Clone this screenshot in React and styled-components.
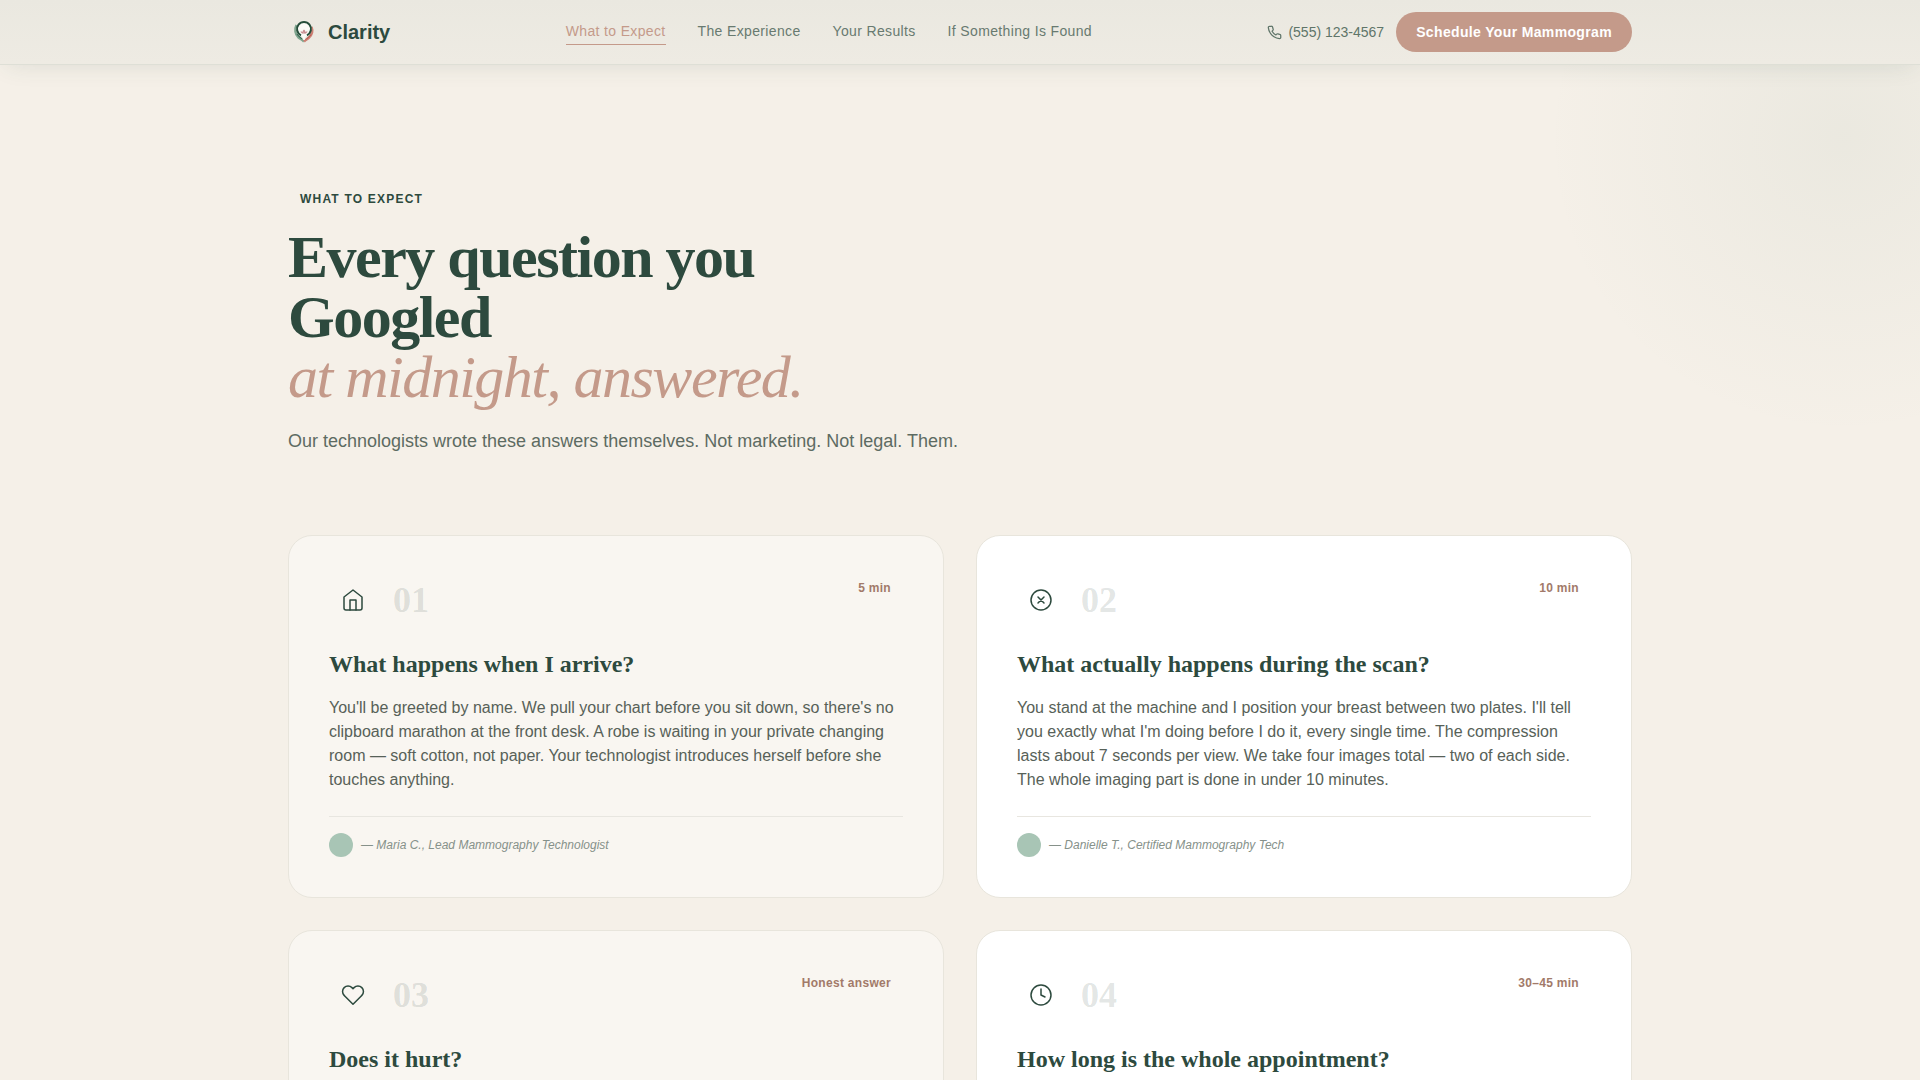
import React from "react";
import styled, { createGlobalStyle } from "styled-components";

const steps = [
    {
        number: "01",
        icon: "home",
        tag: "5 min",
        title: "What happens when I arrive?",
        text: "You'll be greeted by name. We pull your chart before you sit down, so there's no clipboard marathon at the front desk. A robe is waiting in your private changing room — soft cotton, not paper. Your technologist introduces herself before she touches anything.",
        author: "Maria C., Lead Mammography Technologist",
    },
    {
        number: "02",
        icon: "scan",
        tag: "10 min",
        title: "What actually happens during the scan?",
        text: "You stand at the machine and I position your breast between two plates. I'll tell you exactly what I'm doing before I do it, every single time. The compression lasts about 7 seconds per view. We take four images total — two of each side. The whole imaging part is done in under 10 minutes.",
        author: "Danielle T., Certified Mammography Tech",
    },
    { number: "03", icon: "heart", tag: "Honest answer", title: "Does it hurt?" },
    { number: "04", icon: "clock", tag: "30–45 min", title: "How long is the whole appointment?" },
];

const links = ["What to Expect", "The Experience", "Your Results", "If Something Is Found"];

const shapes = {
    home: (
        <>
            <path d="M3 9l9-7 9 7v11a2 2 0 0 1-2 2H5a2 2 0 0 1-2-2z" />
            <path d="M9 22V12h6v10" />
        </>
    ),
    scan: (
        <>
            <circle cx="12" cy="12" r="10" />
            <path d="M15 9l-6 6M9 9l6 6" />
        </>
    ),
    heart: (
        <path d="M20.84 4.61a5.5 5.5 0 0 0-7.78 0L12 5.67l-1.06-1.06a5.5 5.5 0 0 0-7.78 7.78l1.06 1.06L12 21.23l7.78-7.78 1.06-1.06a5.5 5.5 0 0 0 0-7.78z" />
    ),
    clock: (
        <>
            <circle cx="12" cy="12" r="10" />
            <path d="M12 6v6l4 2" />
        </>
    ),
    phone: (
        <path d="M22 16.92v3a2 2 0 0 1-2.18 2 19.79 19.79 0 0 1-8.63-3.07 19.5 19.5 0 0 1-6-6 19.79 19.79 0 0 1-3.07-8.67A2 2 0 0 1 4.11 2h3a2 2 0 0 1 2 1.72c.127.96.361 1.903.7 2.81a2 2 0 0 1-.45 2.11L8.09 9.91a16 16 0 0 0 6 6l1.27-1.27a2 2 0 0 1 2.11-.45c.907.339 1.85.573 2.81.7A2 2 0 0 1 22 16.92z" />
    ),
};

function Icon({ name, size = 24, stroke = 1.5 }) {
    return (
        <svg
            width={size}
            height={size}
            viewBox="0 0 24 24"
            fill="none"
            stroke="currentColor"
            strokeWidth={stroke}
            strokeLinecap="round"
            strokeLinejoin="round"
            aria-hidden="true"
        >
            {shapes[name]}
        </svg>
    );
}

// Wreath with a small flower in the middle
function Logo() {
    return (
        <svg width="32" height="32" viewBox="0 0 32 32" fill="none" aria-hidden="true">
            <path d="M8.5 9C6.5 13 7 18.5 10.5 21.5c2 1.5 4 2.5 5.5 4" stroke="#7fa58f" strokeWidth="2.5" />
            <path d="M23.5 11c1.5 4 .8 7.5-2.5 10.5-1.5 1.5-3.5 2.5-5 4" stroke="#cc8074" strokeWidth="2.5" />
            <circle cx="16" cy="13" r="7.5" fill="#fbfaf6" />
            <path d="M13 19.3a7 7 0 1 1 6 0" stroke="#264d3a" strokeWidth="2" />
            <path d="M9 18c1.5 2.5 3.5 3 5 5" stroke="#3c6b54" strokeWidth="1.2" />
            <path d="M23 18.5c-1.5 2.5-3.5 3-5 5" stroke="#b9554c" strokeWidth="1" />
            <path d="M14 20l1 1 1 3 1-3 1-1z" fill="#fbfaf6" stroke="#fbfaf6" />
            <path d="M16 17.5c-1.8-1.2-1.8-2.5 0-4 1.8 1.5 1.8 2.8 0 4zM16 17.5c-1-1.8-2-2.2-3.6-2 .6 1.5 1.8 2.5 3.6 2zM16 17.5c1-1.8 2-2.2 3.6-2-.6 1.5-1.8 2.5-3.6 2z" fill="#c98f92" />
        </svg>
    );
}

export default function App() {
    return (
        <Page>
            <GlobalStyle />
            <Header>
                <HeaderInner>
                    <Brand href="#">
                        <Logo />
                        Clarity
                    </Brand>
                    <Nav>
                        {links.map((link, i) => (
                            <NavLink key={link} href="#" $active={i === 0}>{link}</NavLink>
                        ))}
                    </Nav>
                    <Actions>
                        <Phone href="tel:5551234567">
                            <Icon name="phone" size={15} stroke={2} />
                            (555) 123-4567
                        </Phone>
                        <Schedule type="button">Schedule Your Mammogram</Schedule>
                    </Actions>
                </HeaderInner>
            </Header>
            <Main>
                <Eyebrow>What to Expect</Eyebrow>
                <Headline>
                    Every question you Googled
                    <br />
                    <em>at midnight, answered.</em>
                </Headline>
                <Intro>Our technologists wrote these answers themselves. Not marketing. Not legal. Them.</Intro>
                <Grid>
                    {steps.map((step, i) => (
                        <Card key={step.number} $white={i % 2 === 1}>
                            <CardTop>
                                <IconBox><Icon name={step.icon} /></IconBox>
                                <Number>{step.number}</Number>
                                <Tag>{step.tag}</Tag>
                            </CardTop>
                            <CardTitle>{step.title}</CardTitle>
                            {step.text && <CardText>{step.text}</CardText>}
                            {step.author && (
                                <CardFooter>
                                    <Avatar />
                                    <cite>— {step.author}</cite>
                                </CardFooter>
                            )}
                        </Card>
                    ))}
                </Grid>
            </Main>
        </Page>
    );
}

const GlobalStyle = createGlobalStyle`
    * {
        box-sizing: border-box;
        margin: 0;
        padding: 0;
    }
    html {
        scrollbar-width: none;
    }
    body {
        background-color: #f5f0e8;
        color: #2d4a3e;
        font-family: "Liberation Sans", Arial, sans-serif;
    }
    a {
        color: inherit;
        text-decoration: none;
    }
    svg {
        display: block;
        flex-shrink: 0;
    }
`;

const Page = styled.div`
    min-height: 100vh;
    background: radial-gradient(
        circle 297px at calc(100% - 76px) 137px,
        rgba(100, 135, 115, 0.07),
        rgba(100, 135, 115, 0)
    );
`;

const Header = styled.header`
    position: sticky;
    top: 0;
    background: linear-gradient(#eae8e0, #eeebe3);
    border-bottom: 1px solid #dedfd6;
    box-shadow: 0 6px 24px -6px rgba(45, 84, 62, 0.12);
`;

const HeaderInner = styled.div`
    display: flex;
    align-items: center;
    justify-content: space-between;
    max-width: 1440px;
    margin: 0 auto;
    padding: 12px 48px;
`;

const Brand = styled.a`
    display: flex;
    align-items: center;
    gap: 8px;
    font-size: 20px;
    font-weight: 700;
`;

const Nav = styled.nav`
    display: flex;
    gap: 32px;
`;

const NavLink = styled.a`
    padding: 1px 0 3px;
    border-bottom: 1px solid ${({ $active }) => ($active ? "#c49a8a" : "transparent")};
    color: ${({ $active }) => ($active ? "#c49a8a" : "#687a70")};
    font-size: 14px;
    line-height: 20px;
    letter-spacing: 0.025em;
`;

const Actions = styled.div`
    display: flex;
    align-items: center;
    gap: 12px;
`;

const Phone = styled.a`
    display: flex;
    align-items: center;
    gap: 6px;
    color: #5f7569;
    font-size: 14px;
`;

const Schedule = styled.button`
    height: 40px;
    padding: 0 20px;
    border: none;
    border-radius: 20px;
    background-color: #c49a8a;
    color: #fff;
    font-family: inherit;
    font-size: 14px;
    font-weight: 700;
    letter-spacing: 0.025em;
    cursor: pointer;
`;

const Main = styled.main`
    max-width: 1440px;
    margin: 0 auto;
    padding: 122px 48px 96px;
`;

const Eyebrow = styled.p`
    padding: 4px 12px;
    font-size: 12px;
    font-weight: 700;
    line-height: 16px;
    letter-spacing: 0.1em;
    text-transform: uppercase;
`;

const Headline = styled.h1`
    max-width: 672px;
    margin: 16px 0 20px;
    font-family: "Liberation Serif", "Times New Roman", serif;
    font-size: 60px;
    font-weight: 700;
    line-height: 60px;
    letter-spacing: -0.025em;
    em {
        color: #c49a8a;
        font-weight: 400;
    }
`;

const Intro = styled.p`
    color: #5d6b62;
    font-size: 18px;
    line-height: 28px;
`;

const Grid = styled.div`
    display: grid;
    grid-template-columns: 1fr 1fr;
    gap: 32px;
    margin-top: 80px;
`;

const Card = styled.article`
    padding: 40px;
    border: 1px solid #e8e5dc;
    border-radius: 24px;
    background-color: ${({ $white }) => ($white ? "#fff" : "#f9f6f1")};
`;

const CardTop = styled.div`
    display: flex;
    align-items: center;
    gap: 16px;
    margin-bottom: 24px;
`;

const IconBox = styled.span`
    display: flex;
    align-items: center;
    justify-content: center;
    width: 48px;
    height: 48px;
`;

const Number = styled.span`
    color: rgba(45, 66, 58, 0.15);
    font-family: "Liberation Serif", "Times New Roman", serif;
    font-size: 36px;
    font-weight: 700;
    line-height: 36px;
`;

const Tag = styled.span`
    align-self: flex-start;
    margin-left: auto;
    padding: 4px 12px;
    color: #a27a69;
    font-size: 12px;
    font-weight: 700;
    line-height: 16px;
    letter-spacing: 0.025em;
`;

const CardTitle = styled.h2`
    font-family: "Liberation Serif", "Times New Roman", serif;
    font-size: 24px;
    font-weight: 700;
    line-height: 32px;
`;

const CardText = styled.p`
    margin-top: 16px;
    color: #576158;
    font-size: 16px;
    line-height: 24px;
`;

const CardFooter = styled.footer`
    display: flex;
    align-items: center;
    gap: 8px;
    margin-top: 24px;
    padding-top: 16px;
    border-top: 1px solid #e8e6e0;
    color: #86918a;
    font-size: 12px;
    line-height: 16px;
`;

const Avatar = styled.span`
    width: 24px;
    height: 24px;
    border-radius: 50%;
    background-color: #a8c5b5;
`;
